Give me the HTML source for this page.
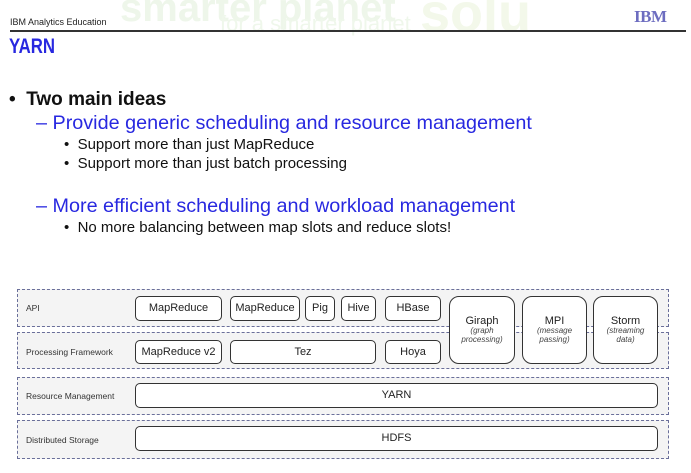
<!DOCTYPE html>
<html><head><style>
body{margin:0;width:691px;height:473px;background:#fff;position:relative;overflow:hidden;font-family:"Liberation Sans",sans-serif}
.a{position:absolute;white-space:nowrap}
.row{position:absolute;left:17px;width:652px;border:1px dashed #6a6f9a;background:#f4f4f4;box-sizing:border-box}
.lbl{position:absolute;left:26px;font-size:8.5px;color:#333}
.b{position:absolute;border:1.5px solid #333;border-radius:5px;background:#fff;box-sizing:border-box;display:flex;flex-direction:column;align-items:center;justify-content:center;font-size:11px;color:#222;text-align:center;line-height:1.1}
.b i{font-size:8px;color:#444;display:block}
</style></head><body>
<div class="a" style="left:120px;top:-14px;font-size:40px;color:#eef6ea;font-weight:bold">smarter planet</div>
<div class="a" style="left:220px;top:11px;font-size:22px;color:#eff7eb">for a smarter planet</div>
<div class="a" style="left:420px;top:-18px;font-size:54px;color:#f3f8ea;font-weight:bold">solu</div>
<div class="a" style="left:10px;top:17px;font-size:9px;color:#222">IBM Analytics Education</div>
<div class="a" style="left:634px;top:7px;font-size:17px;font-weight:bold;color:#6d6dc0;font-family:'Liberation Serif',serif;letter-spacing:-0.5px">IBM</div>
<div class="a" style="left:10px;top:30px;width:676px;height:1.5px;background:#333"></div>
<div class="a" style="left:9px;top:35px;font-size:21px;font-weight:bold;color:#2828e0;transform:scaleX(0.8);transform-origin:left">YARN</div>
<div class="a" style="left:9px;top:89px;font-size:19px;font-weight:bold;color:#111">•&nbsp; Two main ideas</div>
<div class="a" style="left:36px;top:112px;font-size:19.8px;color:#2828e0">– Provide generic scheduling and resource management</div>
<div class="a" style="left:64px;top:136px;font-size:15px;color:#111">•&nbsp; Support more than just MapReduce</div>
<div class="a" style="left:64px;top:155px;font-size:15px;color:#111">•&nbsp; Support more than just batch processing</div>
<div class="a" style="left:36px;top:195px;font-size:19.8px;color:#2828e0">– More efficient scheduling and workload management</div>
<div class="a" style="left:64px;top:219px;font-size:15px;color:#111">•&nbsp; No more balancing between map slots and reduce slots!</div>

<div class="row" style="top:289px;height:38px"></div>
<div class="row" style="top:332px;height:37px"></div>
<div class="row" style="top:377px;height:38px"></div>
<div class="row" style="top:420px;height:39px"></div>
<div class="lbl" style="top:303px">API</div>
<div class="lbl" style="top:347px">Processing Framework</div>
<div class="lbl" style="top:391px">Resource Management</div>
<div class="lbl" style="top:435px">Distributed Storage</div>

<div class="b" style="left:135px;top:296px;width:87px;height:25px">MapReduce</div>
<div class="b" style="left:230px;top:296px;width:70px;height:25px">MapReduce</div>
<div class="b" style="left:305px;top:296px;width:30px;height:25px">Pig</div>
<div class="b" style="left:341px;top:296px;width:35px;height:25px">Hive</div>
<div class="b" style="left:385px;top:296px;width:56px;height:25px">HBase</div>
<div class="b" style="left:449px;top:296px;width:66px;height:68px;border-radius:10px"><span>Giraph</span><i>(graph<br>processing)</i></div>
<div class="b" style="left:522px;top:296px;width:65px;height:68px;border-radius:10px"><span>MPI</span><i>(message<br>passing)</i></div>
<div class="b" style="left:593px;top:296px;width:65px;height:68px;border-radius:10px"><span>Storm</span><i>(streaming<br>data)</i></div>
<div class="b" style="left:135px;top:340px;width:87px;height:24px">MapReduce v2</div>
<div class="b" style="left:230px;top:340px;width:146px;height:24px">Tez</div>
<div class="b" style="left:385px;top:340px;width:56px;height:24px">Hoya</div>
<div class="b" style="left:135px;top:383px;width:523px;height:25px">YARN</div>
<div class="b" style="left:135px;top:426px;width:523px;height:25px">HDFS</div>
</body></html>
